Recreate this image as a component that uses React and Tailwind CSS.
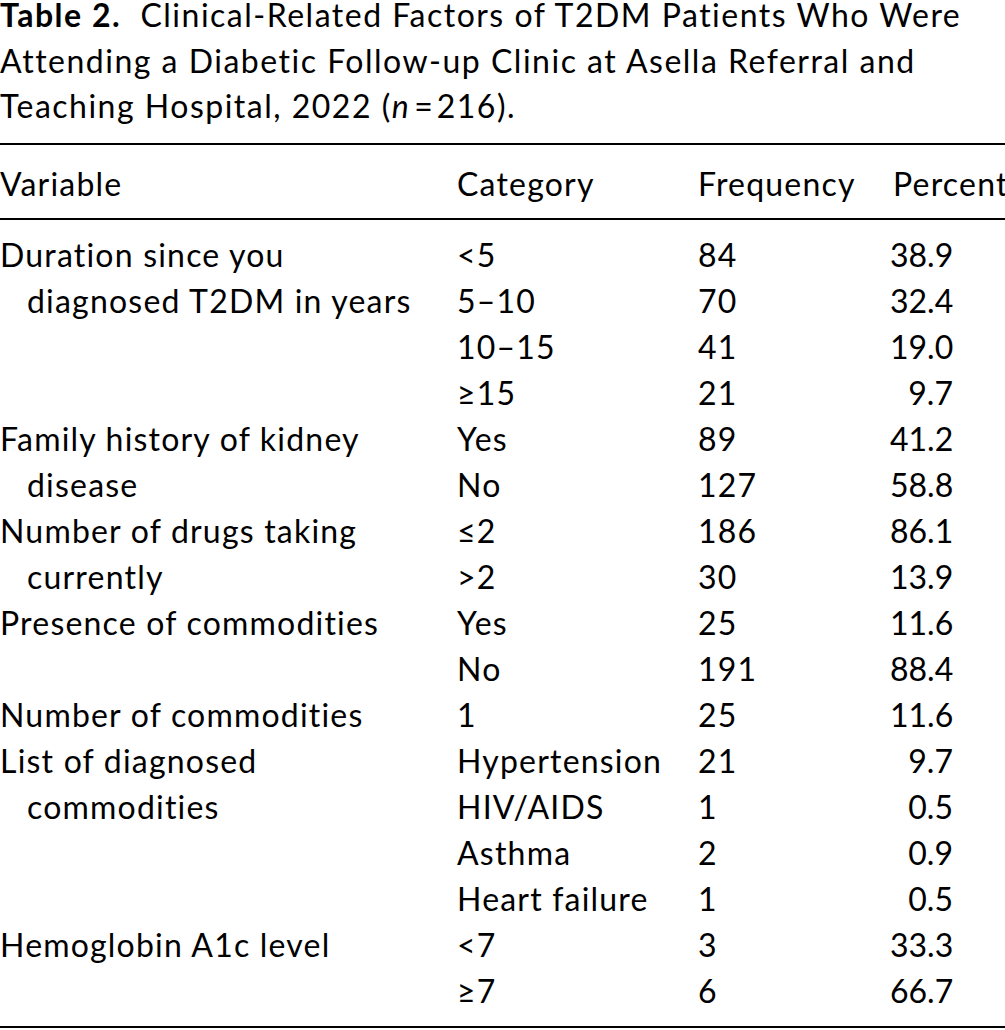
import React from "react";

const rows = [
  ["Duration since you", false, "<5", "84", "38.9"],
  ["diagnosed T2DM in years", true, "5–10", "70", "32.4"],
  ["", false, "10–15", "41", "19.0"],
  ["", false, "≥15", "21", "9.7"],
  ["Family history of kidney", false, "Yes", "89", "41.2"],
  ["disease", true, "No", "127", "58.8"],
  ["Number of drugs taking", false, "≤2", "186", "86.1"],
  ["currently", true, ">2", "30", "13.9"],
  ["Presence of commodities", false, "Yes", "25", "11.6"],
  ["", false, "No", "191", "88.4"],
  ["Number of commodities", false, "1", "25", "11.6"],
  ["List of diagnosed", false, "Hypertension", "21", "9.7"],
  ["commodities", true, "HIV/AIDS", "1", "0.5"],
  ["", false, "Asthma", "2", "0.9"],
  ["", false, "Heart failure", "1", "0.5"],
  ["Hemoglobin A1c level", false, "<7", "3", "33.3"],
  ["", false, "≥7", "6", "66.7"],
];

export default function App() {
  return (
    <div className="w-[1005px] h-[1030px] overflow-hidden bg-white text-black font-['Lato',sans-serif] text-[32px] [font-variant-ligatures:none]">
      <div className="tracking-[1.5px]">
        <div className="whitespace-nowrap leading-[30px] mb-[15.5px]">
          <span className="font-bold">Table 2.</span>
          {"\u00a0 "}Clinical-Related Factors of T2DM Patients Who Were
        </div>
        <div className="whitespace-nowrap leading-[30px] mb-[15.5px]">
          Attending a Diabetic Follow-up Clinic at Asella Referral and
        </div>
        <div className="whitespace-nowrap leading-[30px]">
          Teaching Hospital, 2022 (<i>n</i>
          <span className="tracking-normal">{"\u2009=\u2009"}</span>216).
        </div>
      </div>
      <div className="mt-[22px] border-t-2 border-black tracking-[1.2px]">
        <div className="grid grid-cols-[457px_241px_195px_1fr] h-[73px] pt-[16px] leading-[46px] whitespace-nowrap">
          <div>Variable</div>
          <div>Category</div>
          <div>Frequency</div>
          <div>Percent</div>
        </div>
        <div className="border-t-2 border-black pt-[12px] pb-[12px] border-b-2">
          {rows.map((r, i) => (
            <div
              key={i}
              className="grid grid-cols-[457px_241px_192px_63px] h-[46px] leading-[46px] whitespace-nowrap"
            >
              <div className={r[1] ? "pl-[27px]" : ""}>{r[0]}</div>
              <div>{r[2]}</div>
              <div>{r[3]}</div>
              <div className="text-right tracking-normal">{r[4]}</div>
            </div>
          ))}
        </div>
      </div>
    </div>
  );
}
